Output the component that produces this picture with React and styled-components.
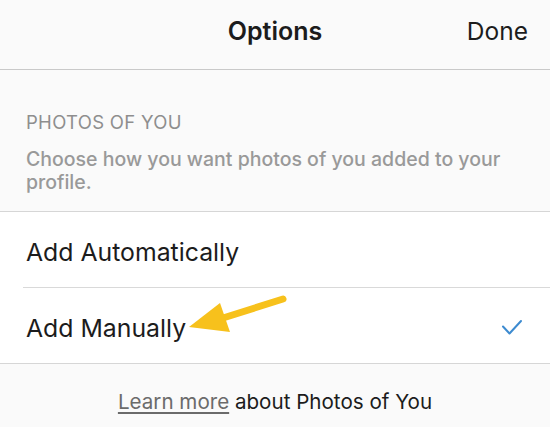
import React from "react";
import styled, { createGlobalStyle } from "styled-components";

const Global = createGlobalStyle`
  html, body { margin: 0; padding: 0; background: #fafafa; }
  body { font-family: Inter, "Liberation Sans", Arial, sans-serif; -webkit-font-smoothing: antialiased; }
  * { box-sizing: border-box; }
`;

const Screen = styled.div`
  width: 550px;
  height: 427px;
  overflow: hidden;
  display: flex;
  flex-direction: column;
  background: #fafafa;
  color: #262626;
`;

const NavBar = styled.header`
  height: 70px;
  flex-shrink: 0;
  display: grid;
  grid-template-columns: 1fr auto 1fr;
  align-items: center;
  padding: 0 22px 8px;
  background: #fafafa;
  border-bottom: 1px solid #c9c9c9;
`;

const NavTitle = styled.h1`
  grid-column: 2;
  margin: 0;
  font-size: 25px;
  font-weight: 600;
  color: #1c1c1c;
`;

const NavAction = styled.button`
  grid-column: 3;
  justify-self: end;
  border: 0;
  background: none;
  padding: 0;
  font: inherit;
  font-size: 24.5px;
  color: #1c1c1c;
`;

const Intro = styled.section`
  flex-shrink: 0;
  padding: 41px 26px 17px;
  background: #fafafa;
  border-bottom: 1px solid #d6d6d6;
`;

const IntroTitle = styled.h2`
  margin: 0;
  font-size: 18.5px;
  line-height: 22px;
  font-weight: 400;
  letter-spacing: 0.3px;
  text-transform: uppercase;
  color: #8e8e8e;
`;

const IntroText = styled.p`
  margin: 15px 0 0;
  font-size: 19.5px;
  line-height: 23px;
  font-weight: 500;
  color: #999999;
`;

const List = styled.ul`
  flex-shrink: 0;
  list-style: none;
  margin: 0;
  padding: 0;
  background: #ffffff;
  border-bottom: 1px solid #d6d6d6;
`;

const Item = styled.li`
  position: relative;
  height: ${p => (p.$last ? 75 : 76)}px;
  margin-left: 23px;
  padding: 5px 27px 0 3px;
  display: flex;
  align-items: center;
  justify-content: space-between;
  border-bottom: ${p => (p.$last ? "none" : "1px solid #d9d9d9")};
  font-size: 24.8px;
  color: #1c1c1c;
`;

const Check = styled.svg`
  width: 22px;
  height: 18px;
`;

const Pointer = styled.svg`
  position: absolute;
  left: 114px;
  top: 0;
  width: 160px;
  height: 50px;
  pointer-events: none;
`;

const Footer = styled.footer`
  flex: 1;
  padding-top: 25px;
  text-align: center;
  font-size: 20.6px;
  color: #1c1c1c;
`;

const LearnLink = styled.a`
  color: #6b6b6b;
  text-decoration: underline;
  text-underline-offset: 3px;
  text-decoration-thickness: 1.5px;
`;

export default function App() {
  return (
    <>
      <Global />
      <Screen>
        <NavBar>
          <NavTitle>Options</NavTitle>
          <NavAction>Done</NavAction>
        </NavBar>
        <Intro>
          <IntroTitle>Photos of You</IntroTitle>
          <IntroText>Choose how you want photos of you added to your profile.</IntroText>
        </Intro>
        <List>
          <Item>Add Automatically</Item>
          <Item $last>
            <span>Add Manually</span>
            <Check viewBox="0 0 22 18">
              <path d="M2 7.5 L8.5 14.5 L20 2" fill="none" stroke="#3d8bd0" strokeWidth="2" strokeLinecap="round" strokeLinejoin="round" />
            </Check>
            <Pointer viewBox="0 0 160 50">
              <path d="M146 11 L86 30" stroke="#f7c11c" strokeWidth="7" strokeLinecap="round" />
              <polygon points="52,39 83,15 93,44" fill="#f7c11c" />
            </Pointer>
          </Item>
        </List>
        <Footer>
          <LearnLink>Learn more</LearnLink> about Photos of You
        </Footer>
      </Screen>
    </>
  );
}
